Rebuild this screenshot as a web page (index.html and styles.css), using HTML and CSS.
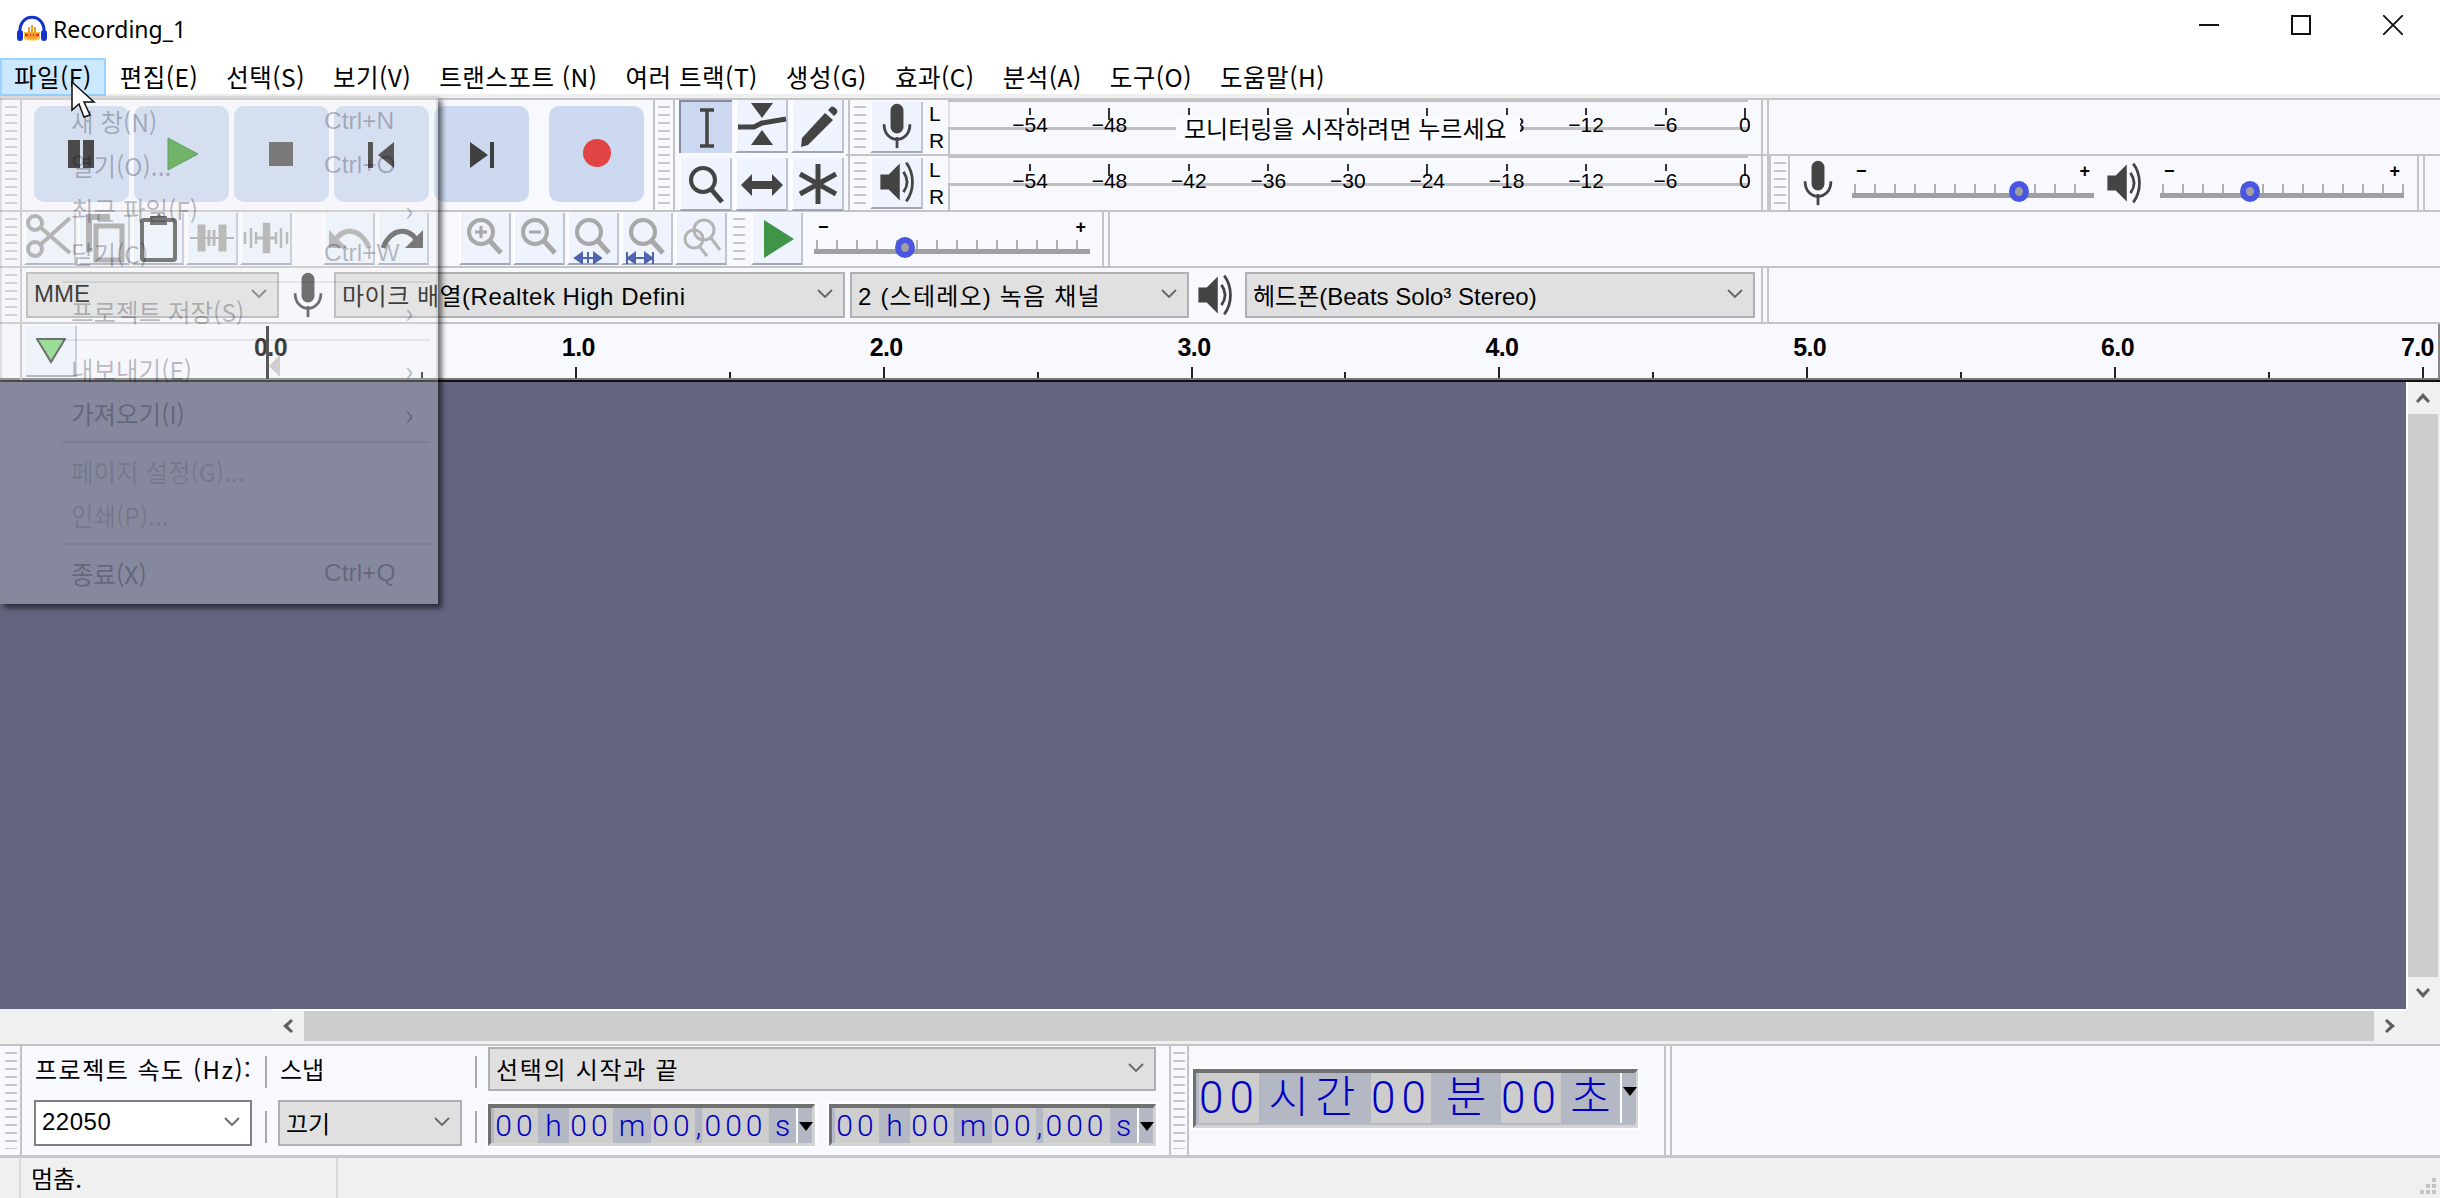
FILE: index.html
```html
<!DOCTYPE html>
<html lang="ko">
<head>
    <meta charset="UTF-8">
    <title>Recording_1</title>
    <link rel="stylesheet" href="styles.css">
</head>
<body>
<svg class="defs" width="0" height="0">
    <symbol id="mic" viewBox="0 0 40 52">
        <rect x="13" y="2" width="14" height="32" rx="7" fill="#444"/>
        <path d="M6 24c0 22 28 22 28 0" fill="none" stroke="#444" stroke-width="3"/>
        <rect x="18.5" y="38" width="3" height="12" fill="#444"/>
    </symbol>
    <symbol id="spk" viewBox="0 0 40 52">
        <path d="M2 18h9L23 6v40L11 34H2z" fill="#444"/>
        <path d="M27 15c5 7 5 15 0 22" fill="none" stroke="#444" stroke-width="3"/>
        <path d="M30 5c9 12 9 30 0 42" fill="none" stroke="#444" stroke-width="3"/>
    </symbol>
    <symbol id="chev" viewBox="0 0 16 10">
        <path d="M1 1l7 7 7-7" fill="none" stroke="#666" stroke-width="1.8"/>
    </symbol>
    <symbol id="lens" viewBox="0 0 52 52">
        <circle cx="22" cy="20" r="12" fill="none" stroke="#a8a8a8" stroke-width="4"/>
        <path d="M31 29l11 12" stroke="#a8a8a8" stroke-width="5"/>
    </symbol>
</svg>

<div class="app">
    <div class="titlebar">
        <svg class="logo" viewBox="0 0 32 28">
            <path d="M8 17h16v7c-2 2-14 2-16 0z" fill="#f5c542"/>
            <path d="M9 20h14" stroke="#e8391d" stroke-width="3"/>
            <path d="M13 12v12M16 10v14M19 12v12" stroke="#f09a2a" stroke-width="2"/>
            <path d="M4 18C2 -3 30 -3 28 18" fill="none" stroke="#1433c8" stroke-width="3"/>
            <rect x="1" y="15" width="6" height="11" rx="3" fill="#1433c8"/>
            <rect x="25" y="15" width="6" height="11" rx="3" fill="#1433c8"/>
        </svg>
        <span class="title-text">Recording_1</span>
        <div class="winbtns">
            <svg viewBox="0 0 20 20"><path d="M0 10h20" stroke="#111" stroke-width="2"/></svg>
            <svg viewBox="0 0 20 20"><rect x="1" y="1" width="18" height="18" fill="none" stroke="#111" stroke-width="2"/></svg>
            <svg viewBox="0 0 20 20"><path d="M0 0l20 20M20 0L0 20" stroke="#111" stroke-width="1.8"/></svg>
        </div>
    </div>

    <div class="menubar">
        <span class="mitem active">파일(F)</span>
        <span class="mitem">편집(E)</span>
        <span class="mitem">선택(S)</span>
        <span class="mitem">보기(V)</span>
        <span class="mitem">트랜스포트 (N)</span>
        <span class="mitem">여러 트랙(T)</span>
        <span class="mitem">생성(G)</span>
        <span class="mitem">효과(C)</span>
        <span class="mitem">분석(A)</span>
        <span class="mitem">도구(O)</span>
        <span class="mitem">도움말(H)</span>
    </div>

    <div class="dock">
        <div class="dock-top">
            <div class="transport">
                <div class="grip grip-first"></div>
                <div class="tbuttons">
                    <div class="tb"><svg viewBox="0 0 96 96"><path d="M34 34h12v28H34zM49 34h11v28H49z" fill="#111"/></svg></div>
                    <div class="tb"><svg viewBox="0 0 96 96"><path d="M34 32l30 16-30 16z" fill="#46a03a" stroke="#2f8040" stroke-width="1"/></svg></div>
                    <div class="tb"><svg viewBox="0 0 96 96"><rect x="35" y="36" width="24" height="24" fill="#505050"/></svg></div>
                    <div class="tb"><svg viewBox="0 0 96 96"><path d="M34 36h5v26h-5zM44 49l16-13v26z" fill="#222"/></svg></div>
                    <div class="tb"><svg viewBox="0 0 96 96"><path d="M36 36l18 13-18 13zM56 36h4v26h-4z" fill="#404040"/></svg></div>
                    <div class="tb tb-rec"><svg viewBox="0 0 96 96"><ellipse cx="48" cy="47" rx="14" ry="14" fill="#e24444"/></svg></div>
                </div>
                <div class="grip grip-box"></div>
            </div>

            <div class="tools">
                <div class="btn pressed"><svg viewBox="0 0 52 52"><path d="M19 8h14M19 44h14M26 8v36" stroke="#444" stroke-width="3.5" fill="none"/></svg></div>
                <div class="btn"><svg viewBox="0 0 52 52"><path d="M15 3h22L26 18zM26 30l11 15H15z" fill="#444"/><path d="M2 27h16l8-4 24-4" fill="none" stroke="#444" stroke-width="5"/></svg></div>
                <div class="btn"><svg viewBox="0 0 52 52"><path d="M10 38L33 13l8 7-25 25-7 2z" fill="#444"/><path d="M36 10l3-3c2-2 8 3 6 6l-3 3z" fill="#444"/></svg></div>
                <div class="btn"><svg viewBox="0 0 52 52"><circle cx="23" cy="22" r="12" fill="none" stroke="#444" stroke-width="4"/><path d="M31 31l11 13" stroke="#444" stroke-width="5"/></svg></div>
                <div class="btn"><svg viewBox="0 0 52 52"><path d="M5 27l11-11v7h20v-7l11 11-11 11v-7H16v7z" fill="#444"/></svg></div>
                <div class="btn"><svg viewBox="0 0 52 52"><path d="M26 6v40M8 16l36 20M44 16L8 36" stroke="#444" stroke-width="5"/></svg></div>
            </div>

            <div class="meters">
                <div class="mrow">
                    <div class="grip grip-small"></div>
                    <div class="btn mbtn"><svg><use href="#mic"/></svg></div>
                    <div class="lr"><span>L</span><span>R</span></div>
                    <div class="meter">
                        <div class="tick"><i></i><b>−54</b></div>
                        <div class="tick tall"><i></i><b>−48</b></div>
                        <div class="tick"><i></i></div>
                        <div class="tick"><i></i></div>
                        <div class="tick"><i></i></div>
                        <div class="tick tall"><i></i></div>
                        <div class="tick"><i></i><b>−18</b></div>
                        <div class="tick"><i></i><b>−12</b></div>
                        <div class="tick"><i></i><b>−6</b></div>
                        <div class="tick tall"><i></i><b>0</b></div>
                        <div class="meter-tip">모니터링을 시작하려면 누르세요</div>
                    </div>
                    <div class="double-sep"></div>
                </div>
                <div class="mrow">
                    <div class="grip grip-small"></div>
                    <div class="btn mbtn"><svg><use href="#spk"/></svg></div>
                    <div class="lr"><span>L</span><span>R</span></div>
                    <div class="meter">
                        <div class="tick"><i></i><b>−54</b></div>
                        <div class="tick tall"><i></i><b>−48</b></div>
                        <div class="tick"><i></i><b>−42</b></div>
                        <div class="tick"><i></i><b>−36</b></div>
                        <div class="tick"><i></i><b>−30</b></div>
                        <div class="tick tall"><i></i><b>−24</b></div>
                        <div class="tick"><i></i><b>−18</b></div>
                        <div class="tick"><i></i><b>−12</b></div>
                        <div class="tick"><i></i><b>−6</b></div>
                        <div class="tick tall"><i></i><b>0</b></div>
                    </div>
                    <div class="double-sep"></div>
                    <div class="grip grip-mixer"></div>
                    <svg class="ico mixer-mic"><use href="#mic"/></svg>
                    <div class="slider s-rec">
                        <div class="s-labels"><span>−</span><span>+</span></div>
                        <div class="s-track"></div>
                        <div class="s-thumb" style="left: 69%"></div>
                    </div>
                    <svg class="ico mixer-spk"><use href="#spk"/></svg>
                    <div class="slider s-play">
                        <div class="s-labels"><span>−</span><span>+</span></div>
                        <div class="s-track"></div>
                        <div class="s-thumb" style="left: 37%"></div>
                    </div>
                    <div class="double-sep end-sep"></div>
                </div>
            </div>
        </div>

        <div class="row">
            <div class="grip grip-first"></div>
            <div class="btn-group first-group">
                <div class="btn sm"><svg viewBox="0 0 52 52"><circle cx="11" cy="11" r="7" fill="none" stroke="#a0a0a0" stroke-width="4"/><circle cx="11" cy="37" r="7" fill="none" stroke="#a0a0a0" stroke-width="4"/><path d="M16 15l30 26M16 33L46 6" stroke="#a0a0a0" stroke-width="4"/></svg></div>
                <div class="btn sm"><svg viewBox="0 0 52 52"><path d="M8 2h24v6H14v32H8z" fill="#a0a0a0"/><rect x="18" y="14" width="26" height="34" fill="none" stroke="#a0a0a0" stroke-width="5"/></svg></div>
                <div class="btn sm"><svg viewBox="0 0 52 52"><rect x="10" y="8" width="33" height="40" rx="2" fill="none" stroke="#505050" stroke-width="4"/><path d="M18 4h7l2-3 2 3h6v9H18z" fill="#505050"/></svg></div>
                <div class="btn sm"><svg viewBox="0 0 52 52"><path d="M4 26h44" stroke="#a8a8a8" stroke-width="2"/><path d="M13 14h5v24h-5zM34 14h5v24h-5zM23 18v16M28 18v16" stroke="#a8a8a8" stroke-width="3" fill="#a8a8a8"/></svg></div>
                <div class="btn sm"><svg viewBox="0 0 52 52"><path d="M24 12h5v28h-5zM5 20v12M11 16v20M16 20v12M36 20v12M41 16v20M47 20v12" stroke="#a8a8a8" stroke-width="2.5" fill="#a8a8a8"/><path d="M16 26h20" stroke="#a8a8a8" stroke-width="3"/></svg></div>
            </div>
            <div class="btn-group undo-group">
                <div class="btn sm"><svg viewBox="0 0 52 52"><path d="M10 34c6-20 28-20 36 2" fill="none" stroke="#a8a8a8" stroke-width="5"/><path d="M6 18v18h18z" fill="#a8a8a8"/></svg></div>
                <div class="btn sm"><svg viewBox="0 0 52 52"><path d="M42 34c-6-20-28-20-36 2" fill="none" stroke="#505050" stroke-width="5"/><path d="M46 18v18H28z" fill="#505050"/></svg></div>
            </div>
            <div class="btn-group zoom-group">
                <div class="btn sm"><svg viewBox="0 0 52 52"><use href="#lens"/><path d="M16 20h12M22 14v12" stroke="#a8a8a8" stroke-width="3"/></svg></div>
                <div class="btn sm"><svg viewBox="0 0 52 52"><use href="#lens"/><path d="M16 20h12" stroke="#a8a8a8" stroke-width="3"/></svg></div>
                <div class="btn sm"><svg viewBox="0 0 52 52"><use href="#lens"/><path d="M8 46h26M8 46l7-5v10zM34 46l-7-5v10zM21 40v11" stroke="#5064b0" stroke-width="2" fill="#5064b0"/></svg></div>
                <div class="btn sm"><svg viewBox="0 0 52 52"><use href="#lens"/><path d="M6 46h26M6 40v12M32 40v12M7 46l7-5v10zM31 46l-7-5v10z" stroke="#5064b0" stroke-width="2" fill="#5064b0"/></svg></div>
                <div class="btn sm"><svg viewBox="0 0 52 52"><circle cx="19" cy="27" r="9" fill="none" stroke="#b4b4b4" stroke-width="3"/><circle cx="29" cy="18" r="10" fill="none" stroke="#b4b4b4" stroke-width="3"/><path d="M36 26l9 12M24 34l8 10" stroke="#b4b4b4" stroke-width="3"/></svg></div>
            </div>
            <div class="grip grip-speed"></div>
            <div class="btn sm"><svg viewBox="0 0 52 52"><path d="M13 8l30 19-30 19z" fill="#3f9448"/></svg></div>
            <div class="slider s-speed">
                <div class="s-labels"><span>−</span><span>+</span></div>
                <div class="s-track"></div>
                <div class="s-thumb" style="left: 33%"></div>
            </div>
            <div class="double-sep speed-sep"></div>
        </div>

        <div class="row row-device">
            <div class="grip grip-first"></div>
            <div class="combo c-host">MME<svg class="chev"><use href="#chev"/></svg></div>
            <svg class="ico dev-ico"><use href="#mic"/></svg>
            <div class="combo c-in">마이크 배열(Realtek High Defini<svg class="chev"><use href="#chev"/></svg></div>
            <div class="combo c-ch">2 (스테레오) 녹음 채널<svg class="chev"><use href="#chev"/></svg></div>
            <svg class="ico dev-ico2"><use href="#spk"/></svg>
            <div class="combo c-out">헤드폰(Beats Solo³ Stereo)<svg class="chev"><use href="#chev"/></svg></div>
            <div class="double-sep"></div>
        </div>

        <div class="ruler-row">
            <div class="ruler-left">
                <div class="ruler-btn"><svg viewBox="0 0 30 26"><path d="M1 1h28L15 24z" fill="#7bd77b" stroke="#444" stroke-width="2"/></svg></div>
            </div>
            <div class="ruler">
                <div class="rt"><b>0.0</b><i></i><span class="playhead"></span></div>
                <div class="rt minor"><i></i></div>
                <div class="rt"><b>1.0</b><i></i></div>
                <div class="rt minor"><i></i></div>
                <div class="rt"><b>2.0</b><i></i></div>
                <div class="rt minor"><i></i></div>
                <div class="rt"><b>3.0</b><i></i></div>
                <div class="rt minor"><i></i></div>
                <div class="rt"><b>4.0</b><i></i></div>
                <div class="rt minor"><i></i></div>
                <div class="rt"><b>5.0</b><i></i></div>
                <div class="rt minor"><i></i></div>
                <div class="rt"><b>6.0</b><i></i></div>
                <div class="rt minor"><i></i></div>
                <div class="rt"><b>7.0</b><i></i></div>
            </div>
        </div>
    </div>

    <div class="track-area">
        <div class="tracks"></div>
        <div class="vscroll">
            <div class="arrow"><svg viewBox="0 0 14 12"><path d="M0 9l7-8 7 8-2 2-5-5-5 5z" fill="#606060"/></svg></div>
            <div class="vthumb"></div>
            <div class="arrow"><svg viewBox="0 0 14 12"><path d="M0 3l7 8 7-8-2-2-5 5-5-5z" fill="#606060"/></svg></div>
        </div>
    </div>
    <div class="hscroll">
        <div class="hspace"></div>
        <div class="harrow"><svg viewBox="0 0 12 14"><path d="M9 0L1 7l8 7 2-2-5-5 5-5z" fill="#606060"/></svg></div>
        <div class="hthumb"></div>
        <div class="harrow"><svg viewBox="0 0 12 14"><path d="M3 0l8 7-8 7-2-2 5-5-5-5z" fill="#606060"/></svg></div>
    </div>

    <div class="selbar">
        <div class="grip grip-first"></div>
        <div class="col col-rate">
            <span class="lbl">프로젝트 속도 (Hz):</span>
            <div class="combo combo-white">22050<svg class="chev"><use href="#chev"/></svg></div>
        </div>
        <div class="col-sep"><i></i><i></i></div>
        <div class="col col-snap">
            <span class="lbl">스냅</span>
            <div class="combo">끄기<svg class="chev"><use href="#chev"/></svg></div>
        </div>
        <div class="col-sep"><i></i><i></i></div>
        <div class="col col-sel">
            <div class="combo combo-sel">선택의 시작과 끝<svg class="chev"><use href="#chev"/></svg></div>
            <div class="clocks">
                <div class="clock">
                    <span class="dg">00</span><span class="un u-h">h</span><span class="dg">00</span><span class="un u-m">m</span><span class="dg">00</span><span class="un u-c">,</span><span class="dg dg3">000</span><span class="un u-s">s</span>
                    <span class="clock-arrow"></span>
                </div>
                <div class="clock">
                    <span class="dg">00</span><span class="un u-h">h</span><span class="dg">00</span><span class="un u-m">m</span><span class="dg">00</span><span class="un u-c">,</span><span class="dg dg3">000</span><span class="un u-s">s</span>
                    <span class="clock-arrow"></span>
                </div>
            </div>
        </div>
        <div class="grip grip-time"></div>
        <div class="clock clock-big">
            <span class="dg">00</span><span class="un u-hr">시간</span><span class="dg">00</span><span class="un u-min">분</span><span class="dg">00</span><span class="un u-sec">초</span>
            <span class="clock-arrow"></span>
        </div>
        <div class="double-sep big-sep"></div>
    </div>

    <div class="statusbar">
        <div class="status-main">멈춤.</div>
        <svg class="resize" viewBox="0 0 18 18"><path d="M14 0h4v4h-4zM8 6h4v4H8zM14 6h4v4h-4zM2 12h4v4H2zM8 12h4v4H8zM14 12h4v4h-4z" fill="#c4c4c4"/></svg>
    </div>

    <!-- fading File menu, lies over the toolbars -->
    <div class="filemenu">
        <div class="fm"><span>새 창(N)</span><em>Ctrl+N</em></div>
        <div class="fm"><span>열기(O)...</span><em>Ctrl+O</em></div>
        <div class="fm"><span>최근 파일(F)</span><u>›</u></div>
        <div class="fm"><span>닫기(C)</span><em>Ctrl+W</em></div>
        <div class="fm-sep"></div>
        <div class="fm"><span>프로젝트 저장(S)</span><u>›</u></div>
        <div class="fm-sep"></div>
        <div class="fm"><span>내보내기(E)</span><u>›</u></div>
        <div class="fm"><span>가져오기(I)</span><u>›</u></div>
        <div class="fm-sep"></div>
        <div class="fm off"><span>페이지 설정(G)...</span></div>
        <div class="fm off"><span>인쇄(P)...</span></div>
        <div class="fm-sep"></div>
        <div class="fm"><span>종료(X)</span><em>Ctrl+Q</em></div>
    </div>

    <svg class="cursor" viewBox="0 0 26 38"><path d="M1 1v28l7-6 5 13 6-2-6-13h10z" fill="#fff" stroke="#111" stroke-width="1.5"/></svg>
</div>
</body>
</html>
```

FILE: styles.css
```css
* {
    box-sizing: border-box;
}
html, body {
    margin: 0;
    height: 100%;
    overflow: hidden;
}
body {
    font-family: "Noto Sans", "Noto Sans CJK KR", sans-serif;
    color: #000;
    background: #f0f0f0;
}
.defs {
    position: absolute;
}
svg {
    display: block;
}
.app {
    position: relative;
    width: 2440px;
    height: 1198px;
    display: flex;
    flex-direction: column;
}

/* title + menu */
.titlebar {
    height: 58px;
    background: #fff;
    display: flex;
    align-items: center;
    padding-left: 16px;
    flex: none;
}
.logo {
    width: 32px;
    height: 28px;
}
.title-text {
    margin-left: 5px;
    font-size: 23px;
}
.winbtns {
    margin-left: auto;
    margin-right: 37px;
    display: flex;
    gap: 72px;
    margin-top: -8px;
}
.winbtns svg {
    width: 20px;
    height: 20px;
}
.menubar {
    height: 40px;
    flex: none;
    background: #fff;
    border-bottom: 4px solid #f0f0f0;
    display: flex;
    align-items: flex-start;
    font-family: "Noto Sans CJK KR", sans-serif;
    font-size: 24.5px;
    letter-spacing: 0.5px;
}
.mitem {
    height: 38px;
    line-height: 38px;
    padding: 0 14px;
    white-space: nowrap;
    position: relative;
}
.mitem.active {
    background: #cce8ff;
    box-shadow: inset 0 0 0 2px #99d1ff;
}

/* toolbars */
.dock {
    flex: none;
    background: #f8f9ff;
    border-top: 2px solid #c4c4c4;
}
.row, .dock-top {
    display: flex;
    border-bottom: 2px solid #c4c4c4;
}
.row {
    height: 56px;
    align-items: center;
}
.dock-top {
    height: 112px;
}
.grip {
    flex: none;
    align-self: stretch;
    background-image: repeating-linear-gradient(to bottom, #c8c8c8 0 2px, transparent 2px 8px);
    background-size: 12px 100%;
    background-repeat: no-repeat;
    background-position: center;
    background-origin: content-box;
    padding: 6px 0;
}
.grip-first {
    width: 22px;
    border-right: 2px solid #c4c4c4;
    background-position: 5px 0;
}
.transport {
    display: flex;
    width: 679px;
    flex: none;
}
.tbuttons {
    display: flex;
    gap: 5px;
    padding: 6px 0 0 12px;
}
.tb {
    width: 95px;
    height: 96px;
    background: #ccd9f0;
    border-radius: 10px;
    display: flex;
    align-items: center;
    justify-content: center;
}
.tb svg {
    width: 96px;
    height: 96px;
    flex: none;
}
.tb-rec {
    margin-left: 15px;
}
.grip-box {
    width: 22px;
    margin-left: 9px;
    border-left: 2px solid #c4c4c4;
    border-right: 2px solid #c4c4c4;
}
.tools {
    display: grid;
    grid-template-columns: repeat(3, 53px);
    grid-auto-rows: 53px;
    gap: 5px 3px;
    flex: none;
    width: 168px;
}
.btn {
    width: 53px;
    height: 53px;
    flex: none;
    background: #eef3fd;
    border-bottom: 2px solid #a0a6b6;
    border-right: 2px solid #c0c4d0;
    border-left: 2px solid #fff;
    display: flex;
    align-items: center;
    justify-content: center;
}
.btn svg {
    width: 52px;
    height: 52px;
    flex: none;
}
.btn.pressed {
    background: #ccd8ef;
    border: 0;
    border-top: 2px solid #848ca2;
    border-left: 2px solid #848ca2;
}
.btn.sm {
    width: 52px;
    height: 52px;
}
.btn-group {
    display: flex;
    gap: 2px;
}
.first-group {
    margin-left: 2px;
}
.undo-group {
    margin-left: 31px;
}
.zoom-group {
    margin-left: 30px;
}
.meters {
    flex: 1;
    display: flex;
    flex-direction: column;
    margin-left: -1px;
}
.mrow {
    height: 56px;
    display: flex;
    align-items: center;
}
.mrow:first-child {
    border-bottom: 2px solid #c4c4c4;
}
.mrow:last-child {
    height: 54px;
}
.grip-small {
    width: 22px;
    margin-left: 2px;
    border-left: 2px solid #c4c4c4;
}
.mbtn {
    height: 51px;
    width: 53px;
    margin-left: 0;
}
.mbtn svg {
    width: 40px;
    height: 48px;
}
.lr {
    width: 25px;
    flex: none;
    align-self: stretch;
    padding-left: 6px;
    display: flex;
    flex-direction: column;
    justify-content: space-between;
    font: 21px/27px "Liberation Sans", sans-serif;
}
.meter {
    position: relative;
    width: 800px;
    flex: none;
    align-self: stretch;
    display: flex;
    justify-content: space-between;
    padding: 8px 3px 0 82px;
    background: linear-gradient(#c0c0c0, #c0c0c0) 0 27px / 100% 3px no-repeat,
        linear-gradient(#c0c0c0, #c0c0c0) 0 27px / 2px 100% no-repeat,
        linear-gradient(#c0c0c0, #c0c0c0) 0 0 / 100% 2px no-repeat,
        linear-gradient(#e4e4e8, #e4e4e8) 0 0 / 2px 27px no-repeat;
}
.tick {
    width: 0;
    display: flex;
    flex-direction: column;
    align-items: center;
    position: relative;
}
.tick i {
    width: 2px;
    height: 7px;
    background: #333;
    flex: none;
}
.tick.tall i {
    height: 12px;
}
.tick b {
    position: absolute;
    top: 4px;
    font: 400 21px/26px "Liberation Sans", sans-serif;
    white-space: nowrap;
    background: none;
}
.meter-tip {
    position: absolute;
    left: 228px;
    top: 16px;
    width: 344px;
    height: 26px;
    line-height: 24px;
    padding-left: 8px;
    background: #fbfcff;
    font-family: "Noto Sans CJK KR", sans-serif;
    font-size: 24px;
    white-space: nowrap;
}
.double-sep {
    flex: none;
    width: 8px;
    height: 100%;
    margin-left: 13px;
    border-left: 2px solid #c4c4c4;
    border-right: 2px solid #c4c4c4;
    align-self: stretch;
}
.grip-mixer {
    width: 21px;
    border-left: 2px solid #c4c4c4;
    border-right: 2px solid #c4c4c4;
}
.ico {
    flex: none;
    width: 40px;
    height: 48px;
}
.mixer-mic {
    margin-left: 8px;
}
.slider {
    position: relative;
    flex: none;
    align-self: stretch;
}
.s-rec {
    width: 242px;
    margin-left: 14px;
}
.mixer-spk {
    margin-left: 10px;
}
.s-play {
    width: 244px;
    margin-left: 16px;
}
.end-sep {
    margin-left: 13px;
}
.s-speed {
    width: 276px;
    margin-left: 11px;
}
.speed-sep {
    margin-left: 12px;
}
.s-labels {
    display: flex;
    justify-content: space-between;
    padding: 0 4px;
    font: 700 18px/26px "Liberation Sans", sans-serif;
    height: 26px;
    margin-top: 2px;
}
.s-track {
    height: 14px;
    margin: 0;
    background: linear-gradient(#a0a0a0, #a0a0a0) 0 100% / 100% 5px no-repeat,
        repeating-linear-gradient(to right, #b0b0b0 0 2px, transparent 2px 20px) 2px 0 / 100% 100% no-repeat;
}
.s-thumb {
    position: absolute;
    top: 25px;
    width: 20px;
    height: 21px;
    margin-left: -10px;
    border-radius: 50%;
    border: 6px solid #4a56e2;
    background: #a0a0a0;
}
.grip-speed {
    width: 20px;
    margin: 0 2px 0 2px;
}
.combo {
    height: 46px;
    flex: none;
    background: #e0e0e0;
    border: 2px solid #b0b0b0;
    display: flex;
    align-items: center;
    padding: 0 0 2px 6px;
    font-family: "Liberation Sans", "Noto Sans CJK KR", sans-serif;
    font-size: 24px;
    white-space: nowrap;
}
.chev {
    margin-left: auto;
    margin-right: 10px;
    width: 16px;
    height: 10px;
    flex: none;
}
.row-device {
    align-items: center;
}
.c-host {
    width: 253px;
    margin-left: 4px;
}
.dev-ico {
    margin: 0 6px 0 9px;
}
.c-in {
    width: 511px;
    letter-spacing: 0.5px;
}
.c-ch {
    width: 339px;
    margin-left: 5px;
    letter-spacing: 1.2px;
}
.dev-ico2 {
    margin: 0 10px 0 6px;
}
.c-out {
    width: 510px;
}
.row-device .double-sep {
    margin-left: 6px;
}

/* ruler */
.ruler-row {
    height: 58px;
    display: flex;
    border-bottom: 2px solid #111;
    box-shadow: inset 0 -2px 0 #777, inset -2px 0 0 #888;
}
.ruler-left {
    width: 268px;
    flex: none;
    padding-left: 22px;
    border-left: 0;
    background: linear-gradient(#c4c4c4, #c4c4c4) 20px 0 / 2px 100% no-repeat;
}
.ruler-btn {
    margin: 2px 0 0 4px;
    width: 51px;
    height: 51px;
    background: #eef3fd;
    border-right: 2px solid #c0c4d0;
    border-bottom: 2px solid #a0a6b6;
    display: flex;
    align-items: center;
    justify-content: center;
}
.ruler-btn svg {
    width: 30px;
    height: 26px;
}
.ruler {
    width: 2155px;
    flex: none;
    display: flex;
    justify-content: space-between;
}
.rt {
    width: 0;
    position: relative;
}
.rt b {
    position: absolute;
    top: 9px;
    left: -14px;
    font: 700 25px/28px "Liberation Sans", sans-serif;
    letter-spacing: -0.6px;
}
.rt:last-child b {
    left: -22px;
}
.rt i {
    position: absolute;
    left: -1px;
    bottom: 2px;
    width: 2px;
    height: 11px;
    background: #222;
}
.rt.minor i {
    height: 6px;
}
.playhead {
    position: absolute;
    left: -2px;
    top: 2px;
    width: 3px;
    height: 53px;
    background: #222;
}
.playhead::after {
    content: "";
    position: absolute;
    left: 3px;
    top: 29px;
    border-top: 11px solid transparent;
    border-bottom: 11px solid transparent;
    border-right: 11px solid #c4c4c4;
}

/* tracks and scrollbars */
.track-area {
    flex: 1;
    display: flex;
    min-height: 0;
}
.tracks {
    flex: 1;
    background: #626480;
    border-right: 2px solid #fff;
}
.vscroll {
    width: 32px;
    flex: none;
    display: flex;
    flex-direction: column;
    padding-right: 2px;
}
.arrow {
    height: 32px;
    display: flex;
    align-items: center;
    justify-content: center;
}
.arrow svg {
    width: 14px;
    height: 12px;
}
.vthumb {
    flex: 1;
    background: #cdcdcd;
}
.hscroll {
    height: 32px;
    flex: none;
    display: flex;
    padding-right: 34px;
}
.hspace {
    width: 272px;
    flex: none;
}
.harrow {
    width: 32px;
    flex: none;
    display: flex;
    align-items: center;
    justify-content: center;
    border-top: 2px solid #fff;
}
.harrow svg {
    width: 12px;
    height: 14px;
}
.hthumb {
    flex: 1;
    background: #cdcdcd;
    border-top: 2px solid #fff;
}

/* selection bar */
.selbar {
    height: 114px;
    margin-top: 3px;
    flex: none;
    display: flex;
    background: #f8f9ff;
    border-top: 2px solid #c4c4c4;
    border-bottom: 3px solid #c8c8c8;
}
.col {
    flex: none;
    display: flex;
    flex-direction: column;
    justify-content: space-between;
    padding: 1px 0 9px;
}
.lbl {
    height: 44px;
    line-height: 44px;
    font-family: "Noto Sans CJK KR", sans-serif;
    font-size: 24px;
    white-space: nowrap;
}
.col-rate {
    width: 218px;
    margin-left: 12px;
}
.col-rate .lbl {
    margin-left: 1px;
    letter-spacing: 1.5px;
}
.col-snap {
    width: 184px;
    margin-left: 11px;
}
.col-snap .lbl {
    margin-left: 2px;
}
.col-sel {
    width: 668px;
    margin-left: 11px;
}
.combo-white {
    background: #fff;
    border-color: #808080;
    letter-spacing: 0.5px;
}
.combo-sel {
    height: 44px;
    letter-spacing: 1.7px;
}
.col-sep {
    flex: none;
    width: 2px;
    margin-left: 13px;
    display: flex;
    flex-direction: column;
    justify-content: space-between;
    padding: 10px 0 12px;
}
.col-sep i {
    height: 32px;
    background: #a8a8a8;
}
.clocks {
    display: flex;
    justify-content: space-between;
}
.clock {
    width: 327px;
    height: 42px;
    background: #b4b8c4;
    border-top: 4px solid #707070;
    border-left: 3px solid #707070;
    border-bottom: 3px solid #d4d4d4;
    border-right: 3px solid #d4d4d4;
    padding: 0 0 0 3px;
    display: flex;
    color: #0000c4;
    font-family: Roboto, "Noto Sans CJK KR", sans-serif;
    font-weight: 300;
    font-size: 30px;
    line-height: 36px;
    box-shadow: 0 0 0 2px #fff;
}
.dg {
    width: 44px;
    flex: none;
    background: #cdcdcd;
    text-align: center;
    letter-spacing: 4px;
    height: 35px;
}
.dg3 {
    width: 67px;
}
.un {
    flex: none;
    text-align: center;
}
.u-h {
    width: 31px;
}
.u-m {
    width: 38px;
}
.u-c {
    width: 7px;
}
.u-s {
    width: 27px;
}
.clock-arrow {
    width: 16px;
    flex: none;
    height: 35px;
    background: #b4b8c4;
    border-left: 2px solid #fff;
    position: relative;
}
.clock-arrow::after {
    content: "";
    position: absolute;
    left: 1px;
    top: 14px;
    border-left: 7px solid transparent;
    border-right: 7px solid transparent;
    border-top: 9px solid #000;
}
.grip-time {
    width: 20px;
    margin-left: 13px;
    border-left: 2px solid #c4c4c4;
    border-right: 2px solid #c4c4c4;
}
.clock-big {
    width: 445px;
    height: 59px;
    margin: 23px 0 0 4px;
    font-size: 44px;
    line-height: 50px;
}
.clock-big .dg {
    width: 60px;
    height: 50px;
    letter-spacing: 6px;
}
.u-hr {
    width: 112px;
    letter-spacing: 6px;
}
.u-min {
    width: 70px;
}
.u-sec {
    width: 59px;
}
.clock-big .clock-arrow {
    height: 50px;
}
.big-sep {
    margin-left: 26px;
}

/* status bar */
.statusbar {
    flex: none;
    height: 40px;
    display: flex;
    position: relative;
    font-family: "Noto Sans CJK KR", sans-serif;
    font-size: 24px;
}
.status-main {
    width: 319px;
    margin-left: 19px;
    padding-left: 10px;
    line-height: 40px;
    border-left: 2px solid #dadada;
    border-right: 2px solid #dadada;
}
.resize {
    position: absolute;
    right: 4px;
    bottom: 2px;
    width: 18px;
    height: 18px;
}

/* File menu */
.filemenu {
    position: absolute;
    left: 0;
    top: 96px;
    width: 438px;
    height: 508px;
    padding: 1px 0 0;
    background: rgba(240, 240, 240, 0.26);
    border: 2px solid rgba(130, 130, 130, 0.2);
    box-shadow: 4px 4px 5px rgba(0, 0, 0, 0.55);
    font-family: "Noto Sans CJK KR", sans-serif;
    font-size: 24.5px;
    color: rgba(0, 0, 20, 0.26);
}
.fm {
    height: 44px;
    display: flex;
    align-items: center;
    padding-left: 69px;
    position: relative;
}
.fm.off {
    color: rgba(0, 0, 20, 0.12);
}
.fm em {
    position: absolute;
    left: 322px;
    font: 24.5px "Liberation Sans", sans-serif;
}
.fm u {
    position: absolute;
    left: 403px;
    text-decoration: none;
    font-size: 28px;
}
.fm-sep {
    height: 2px;
    margin: 6px 6px 6px 60px;
    background: rgba(0, 0, 0, 0.07);
}
.cursor {
    position: absolute;
    left: 71px;
    top: 81px;
    width: 26px;
    height: 38px;
}
```
